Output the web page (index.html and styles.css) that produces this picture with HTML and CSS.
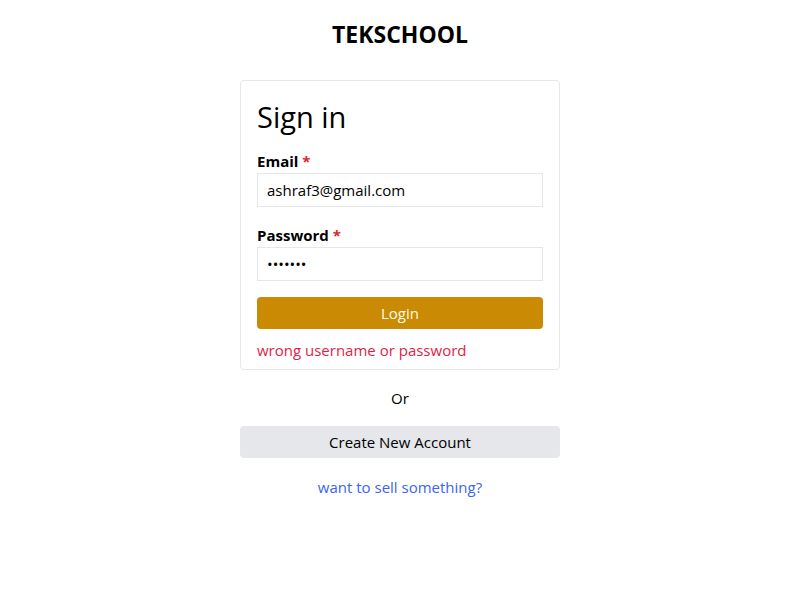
FILE: index.html
```html
<!DOCTYPE html>
<html>
<head>
<meta charset="utf-8">
<link rel="stylesheet" href="styles.css">
</head>
<body>
<div class="page">
  <h1 class="brand">TEKSCHOOL</h1>
  <form class="card">
    <h2 class="title">Sign in</h2>
    <label class="label">Email <span class="req">*</span></label>
    <input class="input" type="text" value="ashraf3@gmail.com">
    <label class="label label-gap">Password <span class="req">*</span></label>
    <input class="input" type="password" value="1234567">
    <button class="btn-login" type="button">Login</button>
    <p class="error">wrong username or password</p>
  </form>
  <p class="or">Or</p>
  <button class="btn-create" type="button">Create New Account</button>
  <a class="sell" href="#">want to sell something?</a>
</div>
</body>
</html>
```

FILE: styles.css
```css
* { box-sizing: border-box; }
body {
  margin: 0;
  background: #fff;
  font-family: "Open Sans", "Noto Sans", sans-serif;
  color: #000;
}
.page {
  width: 320px;
  margin: 0 auto;
  display: flex;
  flex-direction: column;
  padding-top: 18px;
}
.brand {
  margin: 0;
  text-align: center;
  font-size: 23px;
  line-height: 32px;
  font-weight: 700;
  letter-spacing: 0;
}
.card {
  margin-top: 30px;
  border: 1px solid #e5e7eb;
  border-radius: 4px;
  padding: 18px 16px 7px;
  display: flex;
  flex-direction: column;
}
.title {
  margin: 0 0 14px;
  font-size: 29px;
  line-height: 36px;
  font-weight: 400;
}
.label {
  font-size: 15px;
  line-height: 24px;
  font-weight: 700;
}
.label-gap { margin-top: 16px; }
.req { color: #dc2626; }
.input {
  height: 34px;
  border: 1px solid #e5e7eb;
  padding: 0 9px;
  font-family: inherit;
  font-size: 15px;
  color: #000;
  outline: none;
  margin: 0;
}
.btn-login {
  margin-top: 16px;
  height: 32px;
  border: none;
  border-radius: 4px;
  background: #ca8a04;
  color: #fefce8;
  font-family: inherit;
  font-size: 15px;
  padding: 0;
}
.error {
  margin: 9px 0 0;
  font-size: 15px;
  line-height: 24px;
  color: #e11d48;
}
.or {
  margin: 16px 0 0;
  text-align: center;
  font-size: 15px;
  line-height: 24px;
}
.btn-create {
  margin-top: 16px;
  height: 32px;
  border: none;
  border-radius: 4px;
  background: #e5e7eb;
  color: #000;
  font-family: inherit;
  font-size: 15px;
  padding: 0;
}
.sell {
  margin-top: 17px;
  text-align: center;
  font-size: 15px;
  line-height: 24px;
  color: #3b63f6;
  text-decoration: none;
}
```
